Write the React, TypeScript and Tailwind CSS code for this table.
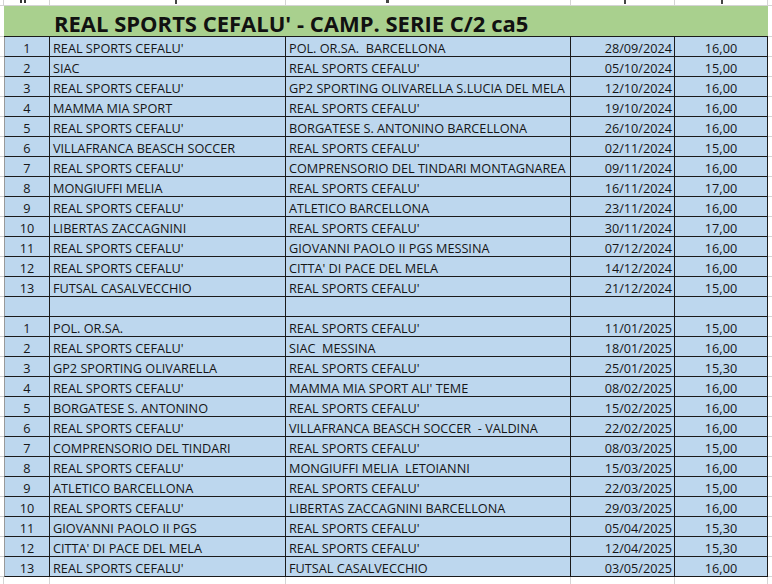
import React from "react";

type Row = [string, string, string, string, string];

const first: Row[] = [
  ["1", "REAL SPORTS CEFALU'", "POL. OR.SA.  BARCELLONA", "28/09/2024", "16,00"],
  ["2", "SIAC", "REAL SPORTS CEFALU'", "05/10/2024", "15,00"],
  ["3", "REAL SPORTS CEFALU'", "GP2 SPORTING OLIVARELLA S.LUCIA DEL MELA", "12/10/2024", "16,00"],
  ["4", "MAMMA MIA SPORT", "REAL SPORTS CEFALU'", "19/10/2024", "16,00"],
  ["5", "REAL SPORTS CEFALU'", "BORGATESE S. ANTONINO BARCELLONA", "26/10/2024", "16,00"],
  ["6", "VILLAFRANCA BEASCH SOCCER", "REAL SPORTS CEFALU'", "02/11/2024", "15,00"],
  ["7", "REAL SPORTS CEFALU'", "COMPRENSORIO DEL TINDARI MONTAGNAREA", "09/11/2024", "16,00"],
  ["8", "MONGIUFFI MELIA", "REAL SPORTS CEFALU'", "16/11/2024", "17,00"],
  ["9", "REAL SPORTS CEFALU'", "ATLETICO BARCELLONA", "23/11/2024", "16,00"],
  ["10", "LIBERTAS ZACCAGNINI", "REAL SPORTS CEFALU'", "30/11/2024", "17,00"],
  ["11", "REAL SPORTS CEFALU'", "GIOVANNI PAOLO II PGS MESSINA", "07/12/2024", "16,00"],
  ["12", "REAL SPORTS CEFALU'", "CITTA' DI PACE DEL MELA", "14/12/2024", "16,00"],
  ["13", "FUTSAL CASALVECCHIO", "REAL SPORTS CEFALU'", "21/12/2024", "15,00"],
  ["", "", "", "", ""],
  ["1", "POL. OR.SA.", "REAL SPORTS CEFALU'", "11/01/2025", "15,00"],
  ["2", "REAL SPORTS CEFALU'", "SIAC  MESSINA", "18/01/2025", "16,00"],
  ["3", "GP2 SPORTING OLIVARELLA", "REAL SPORTS CEFALU'", "25/01/2025", "15,30"],
  ["4", "REAL SPORTS CEFALU'", "MAMMA MIA SPORT ALI' TEME", "08/02/2025", "16,00"],
  ["5", "BORGATESE S. ANTONINO", "REAL SPORTS CEFALU'", "15/02/2025", "16,00"],
  ["6", "REAL SPORTS CEFALU'", "VILLAFRANCA BEASCH SOCCER  - VALDINA", "22/02/2025", "16,00"],
  ["7", "COMPRENSORIO DEL TINDARI", "REAL SPORTS CEFALU'", "08/03/2025", "15,00"],
  ["8", "REAL SPORTS CEFALU'", "MONGIUFFI MELIA  LETOIANNI", "15/03/2025", "16,00"],
  ["9", "ATLETICO BARCELLONA", "REAL SPORTS CEFALU'", "22/03/2025", "15,00"],
  ["10", "REAL SPORTS CEFALU'", "LIBERTAS ZACCAGNINI BARCELLONA", "29/03/2025", "16,00"],
  ["11", "GIOVANNI PAOLO II PGS", "REAL SPORTS CEFALU'", "05/04/2025", "15,30"],
  ["12", "CITTA' DI PACE DEL MELA", "REAL SPORTS CEFALU'", "12/04/2025", "15,30"],
  ["13", "REAL SPORTS CEFALU'", "FUTSAL CASALVECCHIO", "03/05/2025", "16,00"],
];

const cell =
  "h-full border-r border-b border-[#1a1a1a] bg-[#bdd7ee] flex items-center overflow-hidden whitespace-pre pt-[3px]";

function DataRow({ r }: { r: Row }) {
  return (
    <div className="flex h-[20px]">
      <div className="w-[4px] h-full border-b border-[#d4d4d4]" />
      <div className={`${cell} w-[46px] border-l border-l-[#9a9a9a] justify-center`}>{r[0]}</div>
      <div className={`${cell} w-[236px] pl-[3px]`}>{r[1]}</div>
      <div className={`${cell} w-[285px] pl-[3px]`}>{r[2]}</div>
      <div className={`${cell} w-[104px] justify-end pr-[2px]`}>{r[3]}</div>
      <div className={`${cell} w-[93px] justify-center`}>{r[4]}</div>
      <div className="w-[4px] h-full border-b border-[#d4d4d4]" />
    </div>
  );
}

export default function App() {
  return (
    <div
      className="w-[772px] h-[584px] overflow-hidden bg-white text-[#161616] text-[12.7px] leading-none"
      style={{ fontFamily: '"Open Sans", sans-serif' }}
    >
      {/* top cut-off row */}
      <div className="flex h-[6px] border-b border-[#d4d4d4]">
        <div className="w-[4px] h-full border-r border-[#d4d4d4]" />
        <div className="w-[46px] h-full border-r border-[#d4d4d4] flex items-start pl-[16px] gap-[2px]">
          <div className="w-[2px] h-[3px] bg-[#333]" />
          <div className="w-[2px] h-[3px] bg-[#333]" />
        </div>
        <div className="w-[236px] h-full border-r border-[#d4d4d4] flex items-start pl-[125px]">
          <div className="w-[2px] h-[4px] bg-[#444]" />
        </div>
        <div className="w-[285px] h-full border-r border-[#d4d4d4] flex items-start pl-[100px]">
          <div className="w-[3px] h-[3px] bg-[#444]" />
        </div>
        <div className="w-[104px] h-full border-r border-[#d4d4d4] flex items-start pl-[53px]">
          <div className="w-[2px] h-[4px] bg-[#444]" />
        </div>
        <div className="w-[93px] h-full border-r border-[#d4d4d4] flex items-start pl-[46px]">
          <div className="w-[2px] h-[4px] bg-[#444]" />
        </div>
        <div className="w-[4px] h-full" />
      </div>

      {/* title */}
      <div className="flex h-[31px]">
        <div className="w-[4px] h-full border-b border-[#d4d4d4]" />
        <div className="w-[764px] h-full bg-[#a9d08e] border-b border-[#1a1a1a] flex items-center pl-[50px] pt-[4px]">
          <span className="font-bold text-[22px] leading-none text-[#111]">
            REAL SPORTS CEFALU' - CAMP. SERIE C/2 ca5
          </span>
        </div>
        <div className="w-[4px] h-full border-b border-[#d4d4d4]" />
      </div>

      {first.map((r, i) => (
        <DataRow key={i} r={r} />
      ))}

      {/* below table */}
      <div className="flex h-[10px]">
        <div className="w-[4px] h-full border-r border-[#d4d4d4]" />
        <div className="w-[46px] h-full border-r border-[#d4d4d4]" />
        <div className="w-[236px] h-full border-r border-[#d4d4d4]" />
        <div className="w-[285px] h-full border-r border-[#d4d4d4]" />
        <div className="w-[104px] h-full border-r border-[#d4d4d4]" />
        <div className="w-[93px] h-full border-r border-[#d4d4d4]" />
      </div>
    </div>
  );
}
